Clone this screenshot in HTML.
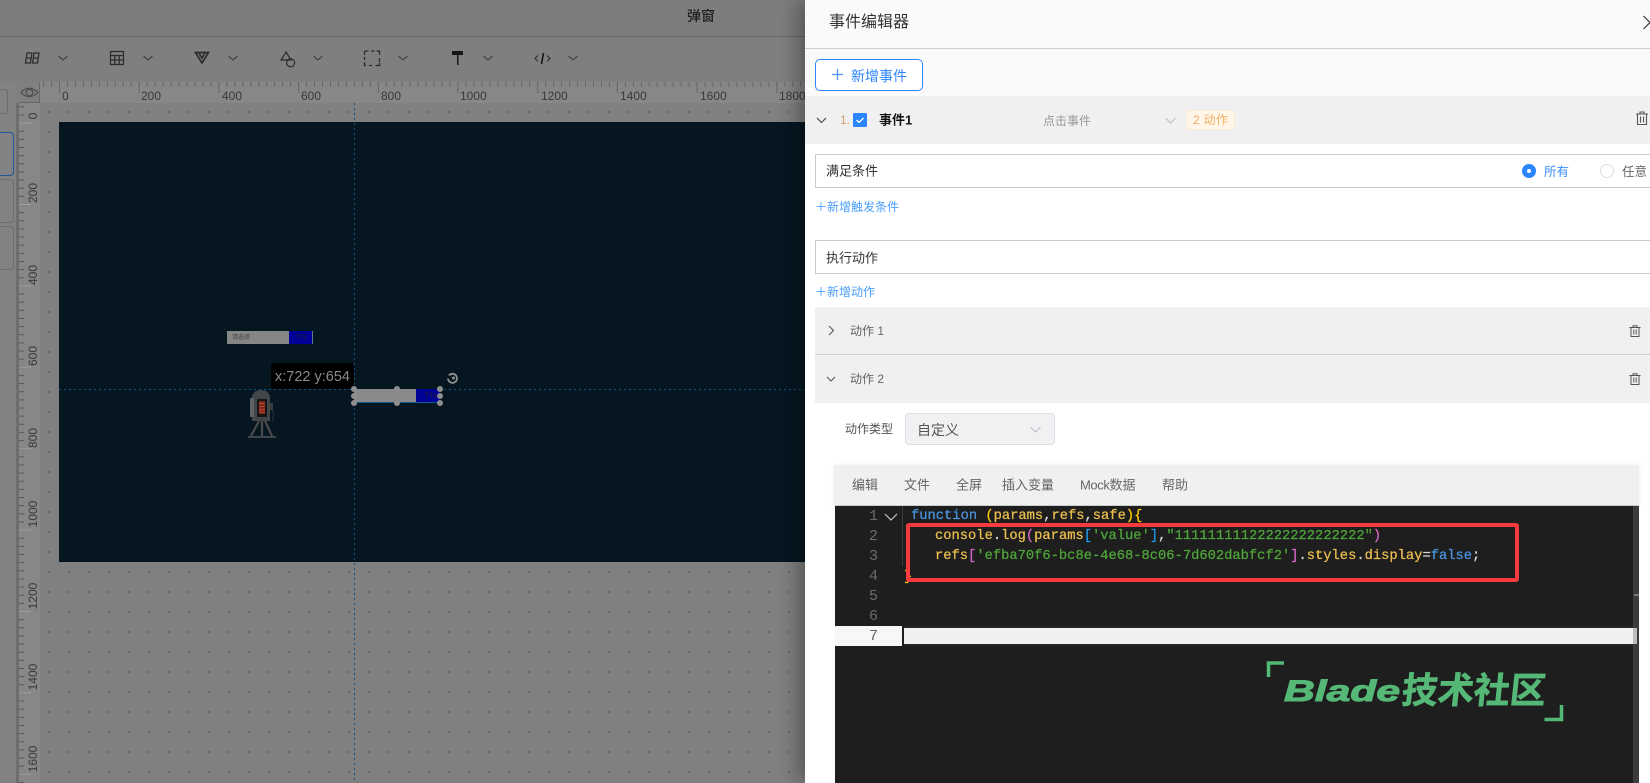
<!DOCTYPE html>
<html lang="zh"><head><meta charset="utf-8"><title>事件编辑器</title>
<style>
html,body{margin:0;padding:0;width:1650px;height:783px;overflow:hidden;background:#808080}
body{position:relative;font-family:"Liberation Sans","Noto Sans CJK SC",sans-serif}
.a{position:absolute;white-space:nowrap}
.t{position:absolute;white-space:nowrap;line-height:1;transform:translateY(-50%)}
.rl{position:absolute;font-size:12px;color:#3a3a3a;line-height:1;top:90px}
.rv{position:absolute;left:27px;width:40px;margin-left:-14px;text-align:center;font-size:12px;color:#3a3a3a;line-height:1;transform:translateY(-50%) rotate(-90deg)}
.code{position:absolute;font-family:"Liberation Mono",monospace;font-size:13.77px;line-height:20px;height:20px;white-space:pre;color:#edbf50;-webkit-text-stroke:.25px currentColor}
.n{position:absolute;font-family:"Liberation Mono",monospace;font-size:15px;line-height:20px;width:20px;text-align:right;left:858px;color:#6b6b6b}
.k{color:#4a94e0}.s{color:#4fa63a}.g{color:#ffd000}.b{color:#1f9cf0}.p{color:#d667c8}.w{color:#d8d8d8}
svg{position:absolute;overflow:visible}
.ic{fill:none;stroke:#2c2c2c;stroke-width:1.2}
</style></head><body>

<!-- left dimmed designer -->
<div class="a" style="left:0;top:0;width:805px;height:36px;background:#7d7d7d"></div>
<div class="a" style="left:0;top:36px;width:805px;height:1px;background:#656565"></div>
<div class="a" style="left:0;top:37px;width:805px;height:45px;background:#7f7f7f"></div>
<div class="t" style="left:687px;top:16px;font-size:14px;color:#1f1f1f;font-weight:500">弹窗</div>

<!-- toolbar icons -->
<svg width="805" height="82" style="left:0;top:0">
<g class="ic">
<path d="M58.500 56l4.500 4 4.500-4M143.500 56l4.500 4 4.500-4M228.500 56l4.500 4 4.500-4M313.500 56l4.500 4 4.500-4M398.500 56l4.500 4 4.500-4M483.500 56l4.500 4 4.500-4M568.500 56l4.500 4 4.500-4" stroke="#444"/>
<path d="M27 53h5l-1.500 10h-5zM27 58h4.500M34 53h5l-1.500 10h-5zM34 58h4.500"/>
<path d="M110.500 51.500h13v13h-13zM110.500 55.500h13M110.500 60h13M114.800 55.500v9M119.200 55.500v9"/>
<path d="M195.500 52.500h13l-6.500 10.500zM199 53l3 5 3-5" stroke-width="1.700"/>
<path d="M286 52l5 8h-10zM293.500 60a4 4 0 1 1-.1-.1"/>
<path d="M364.500 51h4M371 51h3.500M376.500 51h3v4M379.500 58v4M379.500 63v2.500h-4M372 65.500h-3M366 65.500h-1.500v-3.500M364.500 60v-3M364.500 55v-4" stroke-width="1.300"/>
<path d="M538 55.500l-3 3 3 3M547 55.500l3 3-3 3" stroke="#333"/>
<path d="M543.500 53l-2 11" stroke="#111" stroke-width="1.500"/>
</g>
<path d="M452 51h11v4h-11zM457 55h1.500v10h-1.500z" fill="#161616"/>
</svg>

<!-- horizontal ruler -->
<div class="a" style="left:40px;top:82px;width:765px;height:21px;background:#878787"></div>
<div class="a" style="left:40px;top:103px;width:765px;height:19px;background:#808080"></div>
<svg width="805" height="22" style="left:0;top:82px">
<defs><pattern id="mi" x="59" y="0" width="7.97" height="22" patternUnits="userSpaceOnUse"><rect width="1" height="5" fill="#666"/></pattern>
<pattern id="ma" x="59" y="0" width="79.7" height="22" patternUnits="userSpaceOnUse"><rect width="1" height="11" fill="#666"/></pattern></defs>
<rect x="40" width="765" height="22" fill="url(#mi)"/><rect x="59" width="746" height="22" fill="url(#ma)"/>
</svg>
<div class="rl" style="left:62px">0</div><div class="rl" style="left:141px">200</div><div class="rl" style="left:222px">400</div><div class="rl" style="left:301px">600</div><div class="rl" style="left:381px">800</div><div class="rl" style="left:460px">1000</div><div class="rl" style="left:541px">1200</div><div class="rl" style="left:620px">1400</div><div class="rl" style="left:700px">1600</div><div class="rl" style="left:779px">1800</div>

<!-- left strip and vertical ruler -->
<div class="a" style="left:0;top:82px;width:16px;height:701px;background:#828282"></div>
<div class="a" style="left:16px;top:103px;width:3px;height:680px;background:#6e6e6e"></div>
<div class="a" style="left:19px;top:103px;width:21px;height:680px;background:#878787"></div>
<div class="a" style="left:19px;top:82px;width:21px;height:21px;background:#808080;box-sizing:border-box;border-right:1px solid #666;border-bottom:1px solid #666"></div>
<svg width="22" height="22" style="left:19px;top:82px" class="ic"><path d="M2 10.500q8-8.500 17 0q-9 8.500-17 0z" stroke="#4e4e4e"/><circle cx="10.500" cy="10.500" r="3.300" stroke="#4e4e4e"/></svg>
<svg width="22" height="680" style="left:19px;top:103px">
<defs><pattern id="vi" x="0" y="19.600" width="22" height="8.140" patternUnits="userSpaceOnUse"><rect width="5" height="1" fill="#585858"/></pattern>
<pattern id="va" x="0" y="19.600" width="22" height="81.400" patternUnits="userSpaceOnUse"><rect width="12" height="1" fill="#a0a0a0"/></pattern></defs>
<rect width="22" height="680" fill="url(#vi)"/><rect width="22" height="680" fill="url(#va)"/>
</svg>
<div class="rv" style="top:116px">0</div><div class="rv" style="top:193px">200</div><div class="rv" style="top:275px">400</div><div class="rv" style="top:356px">600</div><div class="rv" style="top:438px">800</div><div class="rv" style="top:514px">1000</div><div class="rv" style="top:596px">1200</div><div class="rv" style="top:677px">1400</div><div class="rv" style="top:759px">1600</div>

<div class="a" style="left:-6px;top:89px;width:14px;height:25px;box-sizing:border-box;border:1px solid #6c6c6c;border-radius:3px"></div>
<div class="a" style="left:-6px;top:132px;width:20px;height:44px;box-sizing:border-box;border:1px solid #24579c;border-radius:4px"></div>
<div class="a" style="left:-6px;top:179px;width:20px;height:44px;box-sizing:border-box;border:1px solid #6e6e6e;border-radius:4px"></div>
<div class="a" style="left:-6px;top:226px;width:20px;height:44px;box-sizing:border-box;border:1px solid #6e6e6e;border-radius:4px"></div>

<!-- dots -->
<svg width="765" height="680" style="left:40px;top:103px">
<defs><pattern id="d" x="8" y="8" width="20" height="20" patternUnits="userSpaceOnUse"><rect width="2" height="2" fill="#686868"/></pattern></defs>
<rect width="765" height="680" fill="url(#d)"/>
</svg>

<!-- canvas -->
<div class="a" style="left:59px;top:122px;width:746px;height:440px;background:#051621"></div>

<!-- guides -->
<div class="a" style="left:354px;top:103px;width:1px;height:680px;background:repeating-linear-gradient(to bottom,#0b5688 0 2px,transparent 2px 5px)"></div>
<div class="a" style="left:59px;top:389px;width:746px;height:1px;background:repeating-linear-gradient(to right,#0b5688 0 2px,transparent 2px 5px)"></div>

<!-- widgets -->
<div class="a" style="left:227px;top:331px;width:62px;height:13px;background:#868686"></div>
<div class="t" style="left:232px;top:338px;font-size:6px;color:#444">请选择</div>
<div class="a" style="left:289px;top:331px;width:23px;height:13px;background:#000096"></div>
<div class="a" style="left:312px;top:331px;width:1px;height:13px;background:#5a7a90"></div>
<div class="t" style="left:295px;top:338px;font-size:6px;color:#223">下拉</div>

<div class="a" style="left:271px;top:363px;width:83px;height:26px;background:#000;border-radius:3px"></div>
<div class="t" style="left:275px;top:377px;font-size:14.500px;color:#8a8a8a">x:722 y:654</div>

<div class="a" style="left:354px;top:389px;width:62px;height:13px;background:#8a8a8a"></div>
<div class="a" style="left:416px;top:389px;width:24px;height:13px;background:#000096"></div>
<div class="a" style="left:354px;top:402px;width:86px;height:1px;background:#0c5c96"></div>
<div class="t" style="left:423px;top:396px;font-size:7px;color:#223">下拉</div>
<svg width="120" height="40" style="left:345px;top:370px">
<g fill="#8f8f8f"><circle cx="9" cy="19" r="3"/><circle cx="52" cy="19" r="3"/><circle cx="95" cy="19" r="3"/><circle cx="9" cy="26" r="3"/><circle cx="95" cy="26" r="3"/><circle cx="9" cy="33" r="3"/><circle cx="52" cy="33" r="3"/><circle cx="95" cy="33" r="3"/></g>
<path d="M104 5.500a4.500 4.500 0 1 1-1 3" fill="none" stroke="#8f8f8f" stroke-width="1.800"/><circle cx="108.500" cy="8" r="1.500" fill="#8f8f8f"/>
</svg>

<!-- rocket/robot -->
<svg width="30" height="50" style="left:248px;top:389px">
<path d="M4 8q1-7 9-7t9 7v24H4z" fill="#41464a"/>
<rect x="2" y="9" width="4" height="19" fill="#5e6265"/>
<rect x="9" y="10" width="10" height="18" fill="#161616"/>
<rect x="11" y="12" width="6" height="13" fill="#7c281a"/>
<path d="M11 14.500h6M11 17.500h6M11 20.500h6M11 23h6" stroke="#b8452b"/>
<rect x="22" y="14" width="3" height="7" fill="#3a3d40"/>
<path d="M11 32L3 47M14 32v15M17 32l7 15" stroke="#4a4a4a" stroke-width="2.200" fill="none"/>
<path d="M0 48h28" stroke="#555" stroke-width="1.500"/>
<path d="M25 21v12" stroke="#2b3238"/>
</svg>

<!-- panel -->
<div class="a" style="left:805px;top:0;width:845px;height:783px;background:#fff;box-shadow:-8px 0 18px rgba(0,0,0,.3)"></div>
<div class="a" style="left:805px;top:0;width:845px;height:96px;background:#fafafa"></div>
<div class="a" style="left:805px;top:48px;width:845px;height:1px;background:#cfcfcf"></div>
<div class="t" style="left:829px;top:23px;font-size:16px;color:#333">事件编辑器</div>
<svg width="12" height="16" style="left:1643px;top:15px"><path d="M0.500 1l6.500 6.500-6.500 6.500M7 7.500l6-6M7 7.500l6 6" fill="none" stroke="#333" stroke-width="1.200"/></svg>

<div class="a" style="left:815px;top:59px;width:108px;height:32px;box-sizing:border-box;border:1px solid #2b85ff;border-radius:5px;background:#fff"></div>
<svg width="12" height="12" style="left:832px;top:69px"><path d="M5.500 0v11M0 5.500h11" stroke="#4d96f5" stroke-width="1.300"/></svg>
<div class="t" style="left:851px;top:76px;font-size:14px;color:#2b85ff">新增事件</div>

<div class="a" style="left:805px;top:96px;width:845px;height:48px;background:#f0f0f0"></div>
<svg width="12" height="8" style="left:816px;top:117px"><path d="M1 1l4.500 4.500L10 1" fill="none" stroke="#444" stroke-width="1.100"/></svg>
<div class="t" style="left:840px;top:120px;font-size:12px;color:#d0a070">1.</div>
<div class="a" style="left:853px;top:113px;width:14px;height:14px;background:#2b85ff;border-radius:1px"></div>
<svg width="14" height="14" style="left:853px;top:113px"><path d="M3.500 7l2.500 2.500 4.500-4.500" fill="none" stroke="#fff" stroke-width="1.300"/></svg>
<div class="t" style="left:879px;top:120px;font-size:13px;font-weight:700;color:#111">事件1</div>
<div class="t" style="left:1043px;top:121px;font-size:12px;color:#999">点击事件</div>
<svg width="12" height="8" style="left:1165px;top:117px"><path d="M0.500 1l5 5 5-5" fill="none" stroke="#bcbcbc" stroke-width="1.100"/></svg>
<div class="a" style="left:1186px;top:110px;width:49px;height:20px;box-sizing:border-box;background:#fff5e8;border:1px solid #fdebd3;border-radius:3px"></div>
<div class="t" style="left:1193px;top:120px;font-size:12px;color:#efb165;letter-spacing:.3px">2 动作</div>
<svg width="14" height="14" style="left:1635px;top:111px"><path d="M1 3h12M5 3V1h4v2M2.500 3v10.500h9V3M5.500 5.500v6M8.500 5.500v6" fill="none" stroke="#555" stroke-width="1.100"/></svg>

<div class="a" style="left:815px;top:154px;width:835px;height:34px;box-sizing:border-box;border:1px solid #cacaca;border-right:0;background:#fff"></div>
<div class="t" style="left:826px;top:171px;font-size:13px;color:#333">满足条件</div>
<svg width="16" height="16" style="left:1521px;top:163px"><circle cx="8" cy="8" r="7" fill="#2b85ff"/><circle cx="8" cy="8" r="2" fill="#fff"/></svg>
<div class="t" style="left:1544px;top:172px;font-size:12.500px;color:#3a8fff">所有</div>
<svg width="16" height="16" style="left:1599px;top:163px"><circle cx="8" cy="8" r="6.500" fill="#fff" stroke="#dcdde3"/></svg>
<div class="t" style="left:1622px;top:172px;font-size:12.500px;color:#666">任意</div>
<div class="t" style="left:815px;top:207px;font-size:12px;color:#4a9eff">＋新增触发条件</div>

<div class="a" style="left:815px;top:240px;width:835px;height:34px;box-sizing:border-box;border:1px solid #cacaca;border-right:0;background:#fff"></div>
<div class="t" style="left:826px;top:258px;font-size:13px;color:#333">执行动作</div>
<div class="t" style="left:815px;top:292px;font-size:12px;color:#4a9eff">＋新增动作</div>

<div class="a" style="left:815px;top:307px;width:835px;height:96px;background:#f0f0f0"></div>
<div class="a" style="left:815px;top:354px;width:835px;height:1px;background:#cdcdcd"></div>
<svg width="8" height="12" style="left:828px;top:325px"><path d="M1 1l4.500 4.500L1 10" fill="none" stroke="#555" stroke-width="1.100"/></svg>
<svg width="12" height="8" style="left:826px;top:376px"><path d="M1 1l4 4 4-4" fill="none" stroke="#555" stroke-width="1.100"/></svg>
<div class="t" style="left:850px;top:331px;font-size:12px;color:#666">动作 1</div>
<div class="t" style="left:850px;top:379px;font-size:12px;color:#666">动作 2</div>
<svg width="12" height="12" style="left:1629px;top:325px"><path d="M0.500 2.500h11M4 2.500V0.800h4v1.700M2 2.500v9h8v-9M4.800 4.500v5M7.200 4.500v5" fill="none" stroke="#555"/></svg>
<svg width="12" height="12" style="left:1629px;top:373px"><path d="M0.500 2.500h11M4 2.500V0.800h4v1.700M2 2.500v9h8v-9M4.800 4.500v5M7.200 4.500v5" fill="none" stroke="#555"/></svg>

<div class="t" style="left:845px;top:429px;font-size:12px;color:#555">动作类型</div>
<div class="a" style="left:905px;top:413px;width:150px;height:32px;box-sizing:border-box;background:#f1f1f3;border:1px solid #dcdde3;border-radius:4px"></div>
<div class="t" style="left:917px;top:430px;font-size:14px;color:#555">自定义</div>
<svg width="12" height="8" style="left:1030px;top:426px"><path d="M0.500 1l5 5 5-5" fill="none" stroke="#c0c0c4" stroke-width="1.100"/></svg>

<!-- editor -->
<div class="a" style="left:834px;top:465px;width:805px;height:40px;background:#f0f0f0;box-shadow:0 0 4px rgba(0,0,0,.08)"></div>
<div class="a" style="left:834px;top:505px;width:805px;height:1px;background:#cdcdcd"></div>
<div class="t" style="left:852px;top:485px;font-size:13px;color:#666">编辑</div>
<div class="t" style="left:904px;top:485px;font-size:13px;color:#666">文件</div>
<div class="t" style="left:956px;top:485px;font-size:13px;color:#666">全屏</div>
<div class="t" style="left:1002px;top:485px;font-size:13px;color:#666">插入变量</div>
<div class="t" style="left:1080px;top:485px;font-size:13px;color:#666"><span style="letter-spacing:-.4px">Mock</span>数据</div>
<div class="t" style="left:1162px;top:485px;font-size:13px;color:#666">帮助</div>

<div class="a" style="left:835px;top:506px;width:804px;height:277px;background:#1e1e1e"></div>
<div class="a" style="left:1633px;top:506px;width:6px;height:277px;background:#3c3c3c"></div>
<div class="a" style="left:1634px;top:594px;width:5px;height:2px;background:#777"></div>
<div class="a" style="left:902px;top:506px;width:1px;height:60px;background:#3d3d3d"></div>
<div class="a" style="left:904px;top:626px;width:729px;height:20px;background:#262626"></div>
<div class="a" style="left:835px;top:626px;width:67px;height:20px;background:#f7f7f7"></div>
<div class="a" style="left:904px;top:628px;width:733px;height:16px;background:#f0f0f0"></div>
<div class="a" style="left:1633px;top:628px;width:4px;height:16px;background:#bdbdbd"></div>

<div class="n" style="top:507px">1</div><div class="n" style="top:527px">2</div><div class="n" style="top:547px">3</div><div class="n" style="top:567px">4</div><div class="n" style="top:587px">5</div><div class="n" style="top:607px">6</div><div class="n" style="top:627px;color:#666">7</div>
<svg width="14" height="8" style="left:884px;top:513px"><path d="M1 1l6 6 6-6" fill="none" stroke="#c5c5c5" stroke-width="1.200"/></svg>

<div class="code" style="left:911px;top:507px"><span class="k">function</span> <span class="g">(</span>params<span class="w">,</span>refs<span class="w">,</span>safe<span class="g">){</span></div>
<div class="code" style="left:935px;top:527px">console<span class="w">.</span>log<span class="p">(</span>params<span class="b">[</span><span class="s">'value'</span><span class="b">]</span><span class="w">,</span><span class="s">"11111111122222222222222"</span><span class="p">)</span></div>
<div class="code" style="left:935px;top:547px">refs<span class="p">[</span><span class="s">'efba70f6-bc8e-4e68-8c06-7d602dabfcf2'</span><span class="p">]</span><span class="w">.</span>styles<span class="w">.</span>display<span class="w">=</span><span class="k">false</span><span class="w">;</span></div>
<div class="code g" style="left:904px;top:568px">}</div>

<div class="a" style="left:906px;top:523px;width:613px;height:59px;box-sizing:border-box;border:4px solid #f63a3d;border-radius:3px"></div>

<!-- watermark -->
<svg width="300" height="64" style="left:1265px;top:659px"><path d="M3.500 18V4H19M296.500 46v14.500H279.500" fill="none" stroke="#52b873" stroke-width="3.500"/></svg>
<div class="t" style="left:1284px;top:692px;font-size:30px;font-weight:700;font-style:italic;color:#55b877;-webkit-text-stroke:1px #55b877;transform-origin:0 50%;transform:translateY(-50%) scaleX(1.42)">Blade</div>
<div class="t" style="left:1402px;top:691px;font-size:36px;font-weight:700;color:#55b877;-webkit-text-stroke:.6px #55b877;transform:translateY(-50%) skewX(-6deg)">技术社区</div>

</body></html>
